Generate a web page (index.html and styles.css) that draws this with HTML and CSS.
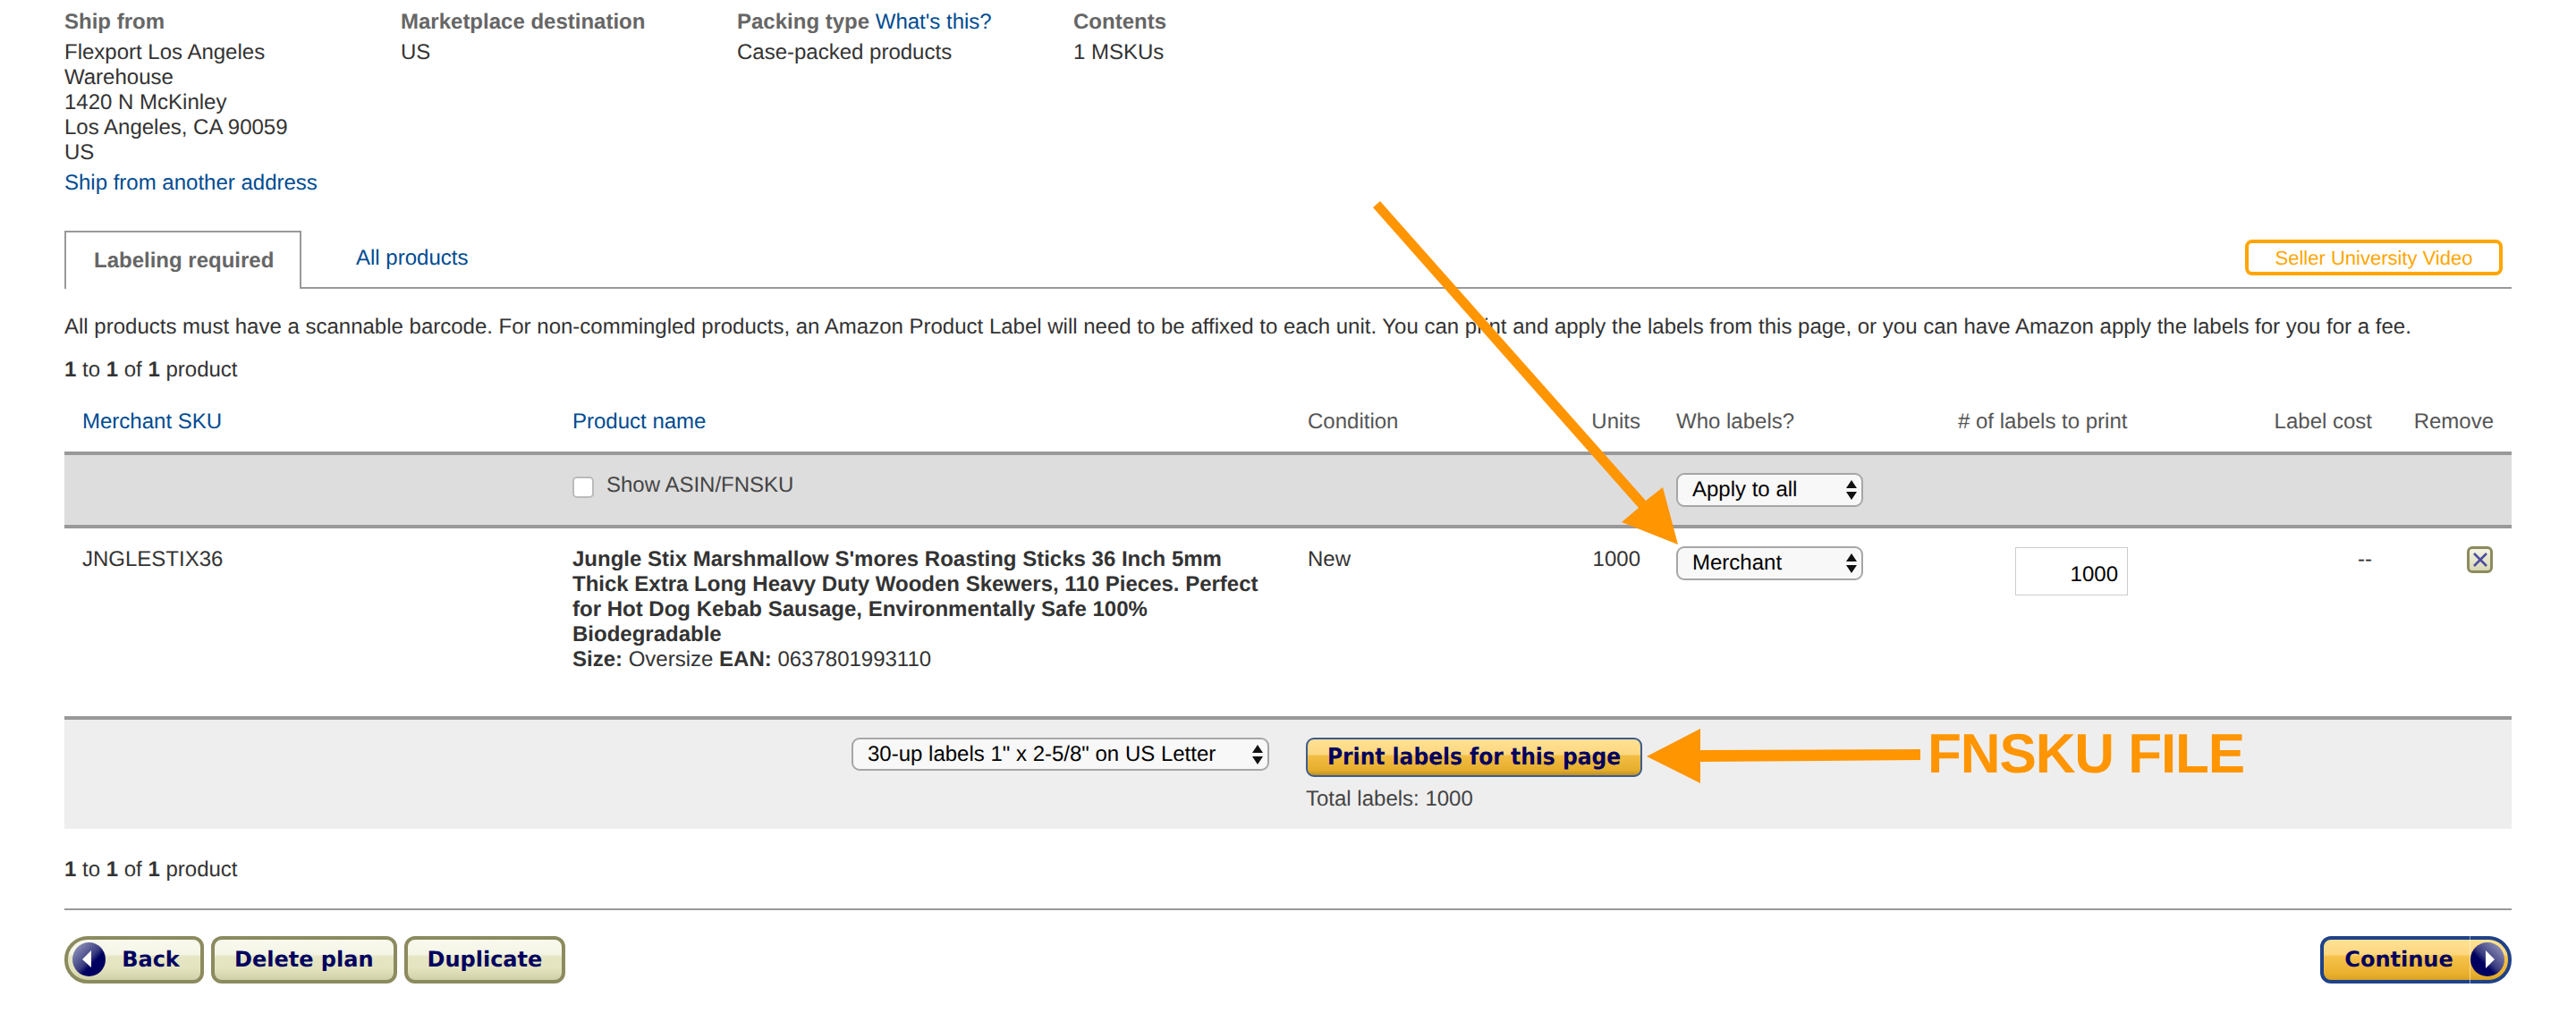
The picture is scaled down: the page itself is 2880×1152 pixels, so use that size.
FILE: index.html
```html
<!DOCTYPE html>
<html lang="en">
<head>
<meta charset="utf-8">
<title>Labeling required</title>
<link rel="stylesheet" href="styles.css">
</head>
<body>
<main class="page">
  <section class="summary">
    <div class="info">
      <div class="info-title">Ship from</div>
      <div class="info-body">Flexport Los Angeles<br>Warehouse<br>1420 N McKinley<br>Los Angeles, CA 90059<br>US</div>
      <a class="link info-link">Ship from another address</a>
    </div>
    <div class="info">
      <div class="info-title">Marketplace destination</div>
      <div class="info-body">US</div>
    </div>
    <div class="info">
      <div class="info-title">Packing type <a class="link plain">What's this?</a></div>
      <div class="info-body">Case-packed products</div>
    </div>
    <div class="info">
      <div class="info-title">Contents</div>
      <div class="info-body">1 MSKUs</div>
    </div>
  </section>

  <nav class="tabs">
    <div class="tab-active">Labeling required</div>
    <a class="link tab">All products</a>
    <a class="video">Seller University Video</a>
  </nav>

  <p class="note">All products must have a scannable barcode. For non-commingled products, an Amazon Product Label will need to be affixed to each unit. You can print and apply the labels from this page, or you can have Amazon apply the labels for you for a fee.</p>
  <p class="count"><b>1</b> to <b>1</b> of <b>1</b> product</p>

  <section class="table">
    <div class="grid head">
      <a class="link">Merchant SKU</a>
      <a class="link">Product name</a>
      <span>Condition</span>
      <span class="right units">Units</span>
      <span>Who labels?</span>
      <span>#&nbsp;of labels to print</span>
      <span class="right">Label cost</span>
      <span class="right">Remove</span>
    </div>
    <div class="grid bulk">
      <span></span>
      <label class="show"><input class="check" type="checkbox">Show ASIN/FNSKU</label>
      <span></span><span></span>
      <div class="select who"><span>Apply to all</span><svg class="updown" viewBox="0 0 12 22"><path d="M6 0 12 9H0ZM0 13H12L6 22Z"/></svg></div>
      <span></span><span></span><span></span>
    </div>
    <div class="grid item">
      <span>JNGLESTIX36</span>
      <div class="product"><b>Jungle Stix Marshmallow S'mores Roasting Sticks 36 Inch 5mm Thick Extra Long Heavy Duty Wooden Skewers, 110 Pieces. Perfect for Hot Dog Kebab Sausage, Environmentally Safe 100% Biodegradable</b><br><b>Size:</b> Oversize <b>EAN:</b> 0637801993110</div>
      <span>New</span>
      <span class="right units">1000</span>
      <div class="select who"><span>Merchant</span><svg class="updown" viewBox="0 0 12 22"><path d="M6 0 12 9H0ZM0 13H12L6 22Z"/></svg></div>
      <div class="qty-cell"><div class="qty">1000</div></div>
      <span class="right">--</span>
      <div class="remove-cell"><div class="remove"><svg class="remove-x" viewBox="0 0 18 18"><path d="M2 2 16 16M16 2 2 16"/></svg></div></div>
    </div>
    <div class="print-bar">
      <div class="select sheet"><span>30-up labels 1" x 2-5/8" on US Letter</span><svg class="updown" viewBox="0 0 12 22"><path d="M6 0 12 9H0ZM0 13H12L6 22Z"/></svg></div>
      <div class="print-col">
        <div class="print-btn">Print labels for this page</div>
        <div class="total">Total labels: 1000</div>
      </div>
    </div>
  </section>

  <p class="count lower"><b>1</b> to <b>1</b> of <b>1</b> product</p>

  <footer class="actions">
    <div class="btn back"><span class="orb"><svg viewBox="0 0 37 38"><defs><linearGradient id="o1" x1="0" y1="0" x2="1" y2="1"><stop offset="0" stop-color="#a5a8c8"/><stop offset=".5" stop-color="#3a3c80"/><stop offset=".62" stop-color="#000060"/></linearGradient></defs><ellipse cx="18.5" cy="19" rx="18.5" ry="19" fill="url(#o1)"/><path d="M21 9V28L11 19Z" fill="#fff"/></svg></span>Back</div>
    <div class="btn">Delete plan</div>
    <div class="btn">Duplicate</div>
    <div class="btn continue">Continue<span class="orb"><svg viewBox="0 0 38 38"><defs><linearGradient id="o2" x1="1" y1="0" x2="0" y2="1"><stop offset="0" stop-color="#a5a8c8"/><stop offset=".5" stop-color="#3a3c80"/><stop offset=".62" stop-color="#000060"/></linearGradient></defs><circle cx="19" cy="19" r="19" fill="url(#o2)"/><path d="M17 9 27 19 17 29Z" fill="#fff"/></svg></span></div>
  </footer>
</main>

<svg class="overlay" viewBox="0 0 2880 1152">
  <path class="arrow" d="M1543 225 1535 232 1832 568 1813 584 1876 609 1859 545 1840 560Z"/>
  <path class="arrow" d="M1841 846 1901 815 1901 839 2147 838 2147 850 1901 852 1901 876Z"/>
</svg>
<div class="callout">FNSKU FILE</div>
</body>
</html>
```
FILE: styles.css
```css
* { box-sizing: border-box; }
html, body { margin: 0; padding: 0; background: #fff; }
body {
  width: 2880px;
  height: 1152px;
  overflow: hidden;
  position: relative;
  font-family: "Liberation Sans", Arial, sans-serif;
  font-size: 24px;
  line-height: 28px;
  color: #333;
  text-rendering: geometricPrecision;
}
.page { padding: 11px 72px 0; }
.link { color: #004b91; }
.summary { display: flex; height: 237px; }
.info { width: 376px; }
.info-title { font-weight: bold; color: #666; margin-bottom: 6px; }
.info-title .plain { font-weight: normal; }
.info-body { width: 300px; }
.info-link { display: block; margin-top: 6px; }

.tabs {
  display: flex;
  align-items: flex-start;
  height: 65px;
  margin-top: 10px;
  border-bottom: 2px solid #999;
  position: relative;
}
.tab-active {
  width: 265px;
  height: 65px;
  padding: 18px 0 0 31px;
  background: #fff;
  border: 2px solid #999;
  border-bottom: 0;
  font-weight: bold;
  color: #666;
}
.tab { margin: 17px 0 0 61px; }
.video {
  margin: 10px 10px 0 auto;
  width: 288px;
  height: 40px;
  border: 4px solid #ffa500;
  border-radius: 8px;
  color: #ffa500;
  font-size: 22px;
  line-height: 33px;
  text-align: center;
}
.note { margin: 29px 0 0; }
.count { margin: 20px 0 0; }
.count.lower { margin-top: 32px; }

.table { margin-top: 11px; }
.grid {
  display: grid;
  grid-template-columns: 548px 822px 239px 173px 315px 191px 272px 136px;
  padding: 0 20px;
}
.right { text-align: right; }
.units { padding-right: 40px; }
.head { height: 70px; padding-top: 19px; color: #555; border-bottom: 4px solid #999; }
.bulk { height: 82px; background: #ddd; border-bottom: 4px solid #999; padding-top: 20px; }
.show { display: flex; align-items: flex-start; gap: 14px; height: 28px; color: #444; }
.check {
  appearance: none;
  width: 24px;
  height: 24px;
  margin: 4px 0 0;
  background: #fff;
  border: 2px solid #bbb;
  border-radius: 5px;
}
.select {
  display: flex;
  align-items: center;
  justify-content: space-between;
  border: 2px solid #a6a6a6;
  border-radius: 9px;
  background: #f8f8f8;
  color: #000;
  height: 38px;
  padding: 0 5px 0 16px;
  font-size: 24px;
}
.who { width: 209px; }
.updown { width: 12px; height: 22px; fill: #111; }
.item { height: 214px; padding-top: 21px; border-bottom: 4px solid #999; }
.product { width: 790px; }
.product b { font-weight: bold; }
.qty-cell { height: 54px; }
.qty {
  width: 126px;
  height: 54px;
  margin-left: 64px;
  padding: 16px 10px 0 0;
  border: 1px solid #ccc;
  background: #fff;
  color: #000;
  text-align: right;
}
.item .who { margin-top: -1px; margin-bottom: auto; }
.remove-cell { display: flex; justify-content: flex-end; padding-right: 1px; margin-top: -1px; }
.remove {
  display: flex;
  align-items: center;
  justify-content: center;
  width: 29px;
  height: 30px;
  border: 3px solid #8b8b5f;
  border-radius: 6px;
  background: linear-gradient(#f4f4e4, #d8d8b4);
}
.remove-x { width: 18px; height: 18px; fill: none; stroke: #4b4b9f; stroke-width: 2.5; }
.print-bar {
  display: flex;
  height: 122px;
  background: #eee;
  padding: 20px 0 0 880px;
  gap: 41px;
}
.sheet { width: 467px; margin: 0; height: 37px; }
.print-col { display: flex; flex-direction: column; }
.print-btn {
  width: 376px;
  height: 44px;
  border: 2px solid #3c5c8c;
  border-radius: 9px;
  background: linear-gradient(#ffe195 0, #fdd77f 42%, #f3bd45 46%, #e5ae2c 86%, #bf8f25 100%);
  color: #000060;
  font: bold 26px/40px "DejaVu Sans Condensed", "DejaVu Sans", sans-serif;
  text-align: center;
}
.total { margin-top: 11px; color: #444; }
.actions {
  display: flex;
  gap: 8px;
  margin-top: 29px;
  border-top: 2px solid #999;
  padding-top: 29px;
}
.btn {
  display: flex;
  align-items: center;
  justify-content: center;
  height: 53px;
  padding: 0 22px 2px;
  border: 4px solid #8b8b5f;
  border-radius: 12px;
  background: linear-gradient(#f8f8ee 0, #f5f5e6 36%, #e6e6c6 42%, #e4e4c0 70%, #d0d0a8 100%);
  color: #000060;
  font: bold 24px/1 "DejaVu Sans", sans-serif;
  white-space: nowrap;
}
.orb { display: flex; }
.back {
  width: 156px;
  padding: 0 0 2px 37px;
  border-radius: 26px 12px 12px 26px;
  position: relative;
}
.back .orb { position: absolute; left: 5px; top: 3px; width: 37px; height: 38px; }
.continue {
  width: 214px;
  margin-left: auto;
  padding: 0 38px 2px 0;
  border-color: #1f4288;
  border-radius: 12px 26px 26px 12px;
  background: linear-gradient(#ffe195 0, #fdd77f 36%, #f6c24c 42%, #e9b02c 85%, #d9a225 100%);
  position: relative;
}
.continue::after {
  content: "";
  position: absolute;
  left: 163px;
  top: -4px;
  bottom: -4px;
  width: 1px;
  background: rgba(255, 255, 255, .5);
}
.continue .orb { position: absolute; right: 4px; top: 3px; width: 38px; height: 38px; }

.overlay { position: absolute; left: 0; top: 0; width: 2880px; height: 1152px; pointer-events: none; }
.arrow { fill: #ff9500; }
.callout {
  position: absolute;
  left: 2155px;
  top: 809px;
  color: #ff9500;
  font: bold 62px/70px "Liberation Sans", Arial, sans-serif;
  letter-spacing: -1.1px;
}
```
